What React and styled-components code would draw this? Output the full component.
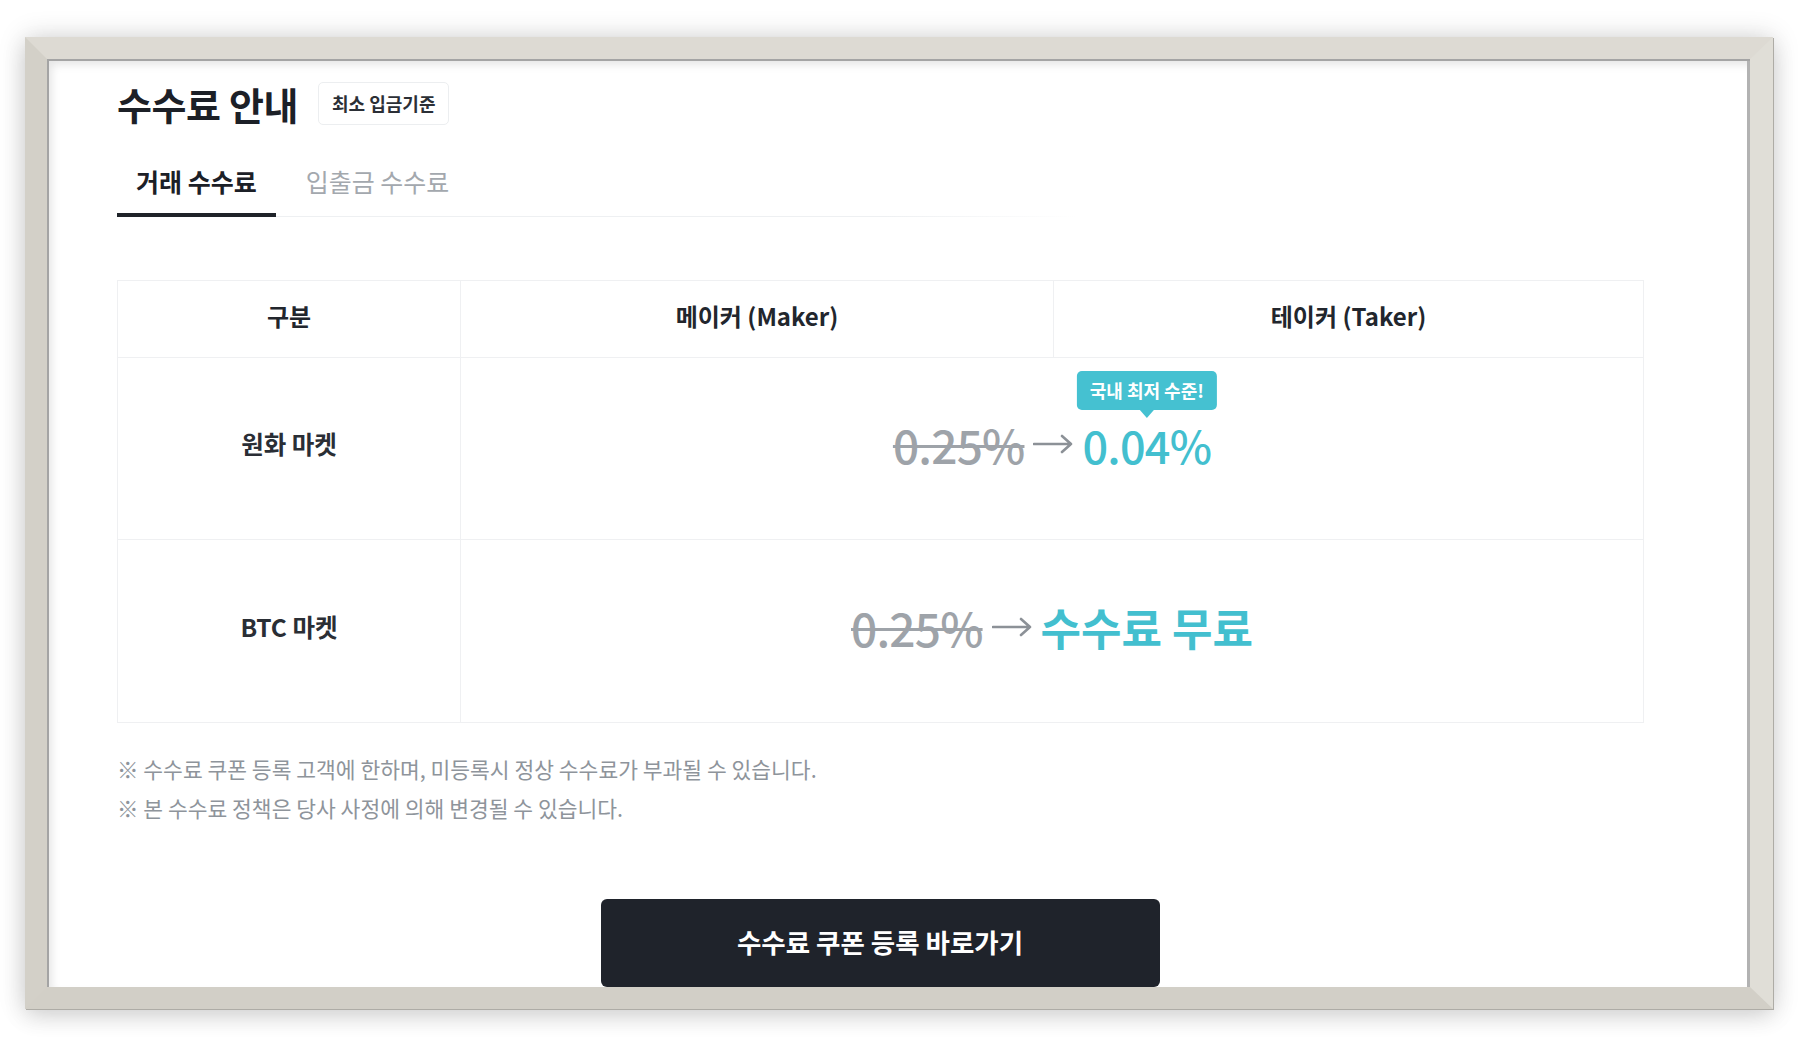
import React from "react";
import styled, { createGlobalStyle } from "styled-components";

const GlobalStyle = createGlobalStyle`
  html, body { margin: 0; padding: 0; background: #ffffff; }
  body { font-family: "Noto Sans CJK KR", "Noto Sans", sans-serif; }
  * { box-sizing: border-box; }
`;

const Stage = styled.div`
  width: 1798px;
  height: 1047px;
  padding: 37px 25px 38px 25px;
  background: #ffffff;
  overflow: hidden;
`;

const Frame = styled.div`
  width: 1748px;
  height: 972px;
  border-style: solid;
  border-width: 22px 23px 22px 22px;
  border-color: #dddad3 #e0ded7 #d2cfc7 #d3d0c8;
  box-shadow: 1px 1px 0 #aeaca6, 0 0 26px rgba(0, 0, 0, 0.16), 0 8px 22px rgba(0, 0, 0, 0.1);
`;

const Mat = styled.div`
  width: 100%;
  height: 100%;
  background: #ffffff;
  overflow: hidden;
  padding-left: 70px;
  box-shadow: inset 2px 2px 0 #a4a4a4, inset -3px 0 0 #b2b2b2, inset 5px 6px 8px rgba(0, 0, 0, 0.1);
`;

const Content = styled.div`
  width: 1526px;
  display: flex;
  flex-direction: column;
`;

const Header = styled.div`
  display: flex;
  align-items: center;
  gap: 20px;
  height: 50px;
  margin-top: 19px;
`;

const Title = styled.h1`
  margin: 0;
  font-size: 38px;
  font-weight: 700;
  color: #1c2027;
  letter-spacing: -0.4px;
`;

const Badge = styled.span`
  display: inline-flex;
  align-items: center;
  height: 43px;
  padding: 0 13px;
  border: 1px solid #eceef0;
  border-radius: 5px;
  font-size: 18px;
  font-weight: 600;
  color: #2b2f36;
`;

const TabBar = styled.div`
  display: flex;
  gap: 11px;
  margin-top: 26px;
  width: 960px;
  background: linear-gradient(to right, #eef0f2 80%, rgba(238, 240, 242, 0)) no-repeat left bottom / 100% 1px;
`;

const Tab = styled.div`
  height: 63px;
  padding: 0 19px 5px;
  display: flex;
  align-items: center;
  font-size: 25px;
  font-weight: ${(p) => (p.$active ? 700 : 400)};
  color: ${(p) => (p.$active ? "#1c2027" : "#a3a8ae")};
  border-bottom: 4px solid ${(p) => (p.$active ? "#1f2329" : "transparent")};
`;

const Table = styled.table`
  margin-top: 63px;
  width: 1526px;
  border-collapse: collapse;
  table-layout: fixed;
`;

const Th = styled.th`
  height: 77px;
  padding: 0 0 7px;
  border: 1px solid #eff0f2;
  font-size: 24px;
  font-weight: 600;
  color: #22262d;
  text-align: center;
`;

const Label = styled.td`
  height: ${(p) => p.$h}px;
  padding: 0 0 10px;
  border: 1px solid #eff0f2;
  font-size: 24.5px;
  font-weight: 600;
  color: #2a2e35;
  text-align: center;
`;

const ValueCell = styled.td`
  height: ${(p) => p.$h}px;
  padding: 0 0 7px;
  border: 1px solid #eff0f2;
  text-align: center;
`;

const Values = styled.div`
  display: inline-flex;
  align-items: center;
  gap: 9px;
  line-height: 1;
`;

const OldRate = styled.span`
  font-size: 46px;
  font-weight: 500;
  letter-spacing: -0.8px;
  color: #9ea3a9;
  text-decoration: line-through;
  text-decoration-thickness: 3px;
  text-decoration-color: #9ea3a9;
`;

const NewRate = styled.span`
  position: relative;
  font-size: 45px;
  font-weight: 500;
  letter-spacing: -0.8px;
  color: #43bfcf;
`;

const FreeText = styled.span`
  font-size: 44px;
  font-weight: 700;
  color: #43bfcf;
`;

const Tooltip = styled.span`
  position: absolute;
  left: 50%;
  bottom: calc(100% + 12px);
  transform: translateX(-50%);
  white-space: nowrap;
  background: #45c1d1;
  color: #ffffff;
  font-size: 18px;
  font-weight: 700;
  letter-spacing: 0;
  line-height: 39px;
  height: 39px;
  padding: 0 13px;
  border-radius: 5px;
  &::after {
    content: "";
    position: absolute;
    left: 50%;
    top: 100%;
    transform: translateX(-50%);
    border-style: solid;
    border-width: 8px 7px 0 7px;
    border-color: #45c1d1 transparent transparent transparent;
  }
`;

const Notes = styled.div`
  margin-top: 26px;
  font-size: 21.5px;
  line-height: 39px;
  color: #8e949b;
`;

const CtaButton = styled.button`
  margin: 72px auto 0;
  width: 559px;
  height: 88px;
  flex-shrink: 0;
  padding: 0 0 4px;
  border: none;
  border-radius: 6px;
  background: #1f232b;
  color: #ffffff;
  font-family: inherit;
  font-size: 26.5px;
  font-weight: 700;
`;

const Arrow = () => (
  <svg width="40" height="22" viewBox="0 0 40 22" fill="none">
    <path
      d="M1 11 H38 M29 3 L38 11 L29 19"
      stroke="#8c9197"
      strokeWidth="2.6"
      strokeLinecap="round"
      strokeLinejoin="round"
    />
  </svg>
);

export default function App() {
  return (
    <>
      <GlobalStyle />
      <Stage>
        <Frame>
          <Mat>
            <Content>
              <Header>
                <Title>수수료 안내</Title>
                <Badge>최소 입금기준</Badge>
              </Header>
              <TabBar>
                <Tab $active>거래 수수료</Tab>
                <Tab>입출금 수수료</Tab>
              </TabBar>
              <Table>
                <colgroup>
                  <col style={{ width: "343px" }} />
                  <col style={{ width: "593px" }} />
                  <col style={{ width: "590px" }} />
                </colgroup>
                <thead>
                  <tr>
                    <Th>구분</Th>
                    <Th>메이커 (Maker)</Th>
                    <Th>테이커 (Taker)</Th>
                  </tr>
                </thead>
                <tbody>
                  <tr>
                    <Label $h={182}>원화 마켓</Label>
                    <ValueCell $h={182} colSpan={2}>
                      <Values>
                        <OldRate>0.25%</OldRate>
                        <Arrow />
                        <NewRate>
                          <Tooltip>국내 최저 수준!</Tooltip>
                          0.04%
                        </NewRate>
                      </Values>
                    </ValueCell>
                  </tr>
                  <tr>
                    <Label $h={183}>BTC 마켓</Label>
                    <ValueCell $h={183} colSpan={2}>
                      <Values>
                        <OldRate>0.25%</OldRate>
                        <Arrow />
                        <FreeText>수수료 무료</FreeText>
                      </Values>
                    </ValueCell>
                  </tr>
                </tbody>
              </Table>
              <Notes>
                <div>※ 수수료 쿠폰 등록 고객에 한하며, 미등록시 정상 수수료가 부과될 수 있습니다.</div>
                <div>※ 본 수수료 정책은 당사 사정에 의해 변경될 수 있습니다.</div>
              </Notes>
              <CtaButton>수수료 쿠폰 등록 바로가기</CtaButton>
            </Content>
          </Mat>
        </Frame>
      </Stage>
    </>
  );
}
